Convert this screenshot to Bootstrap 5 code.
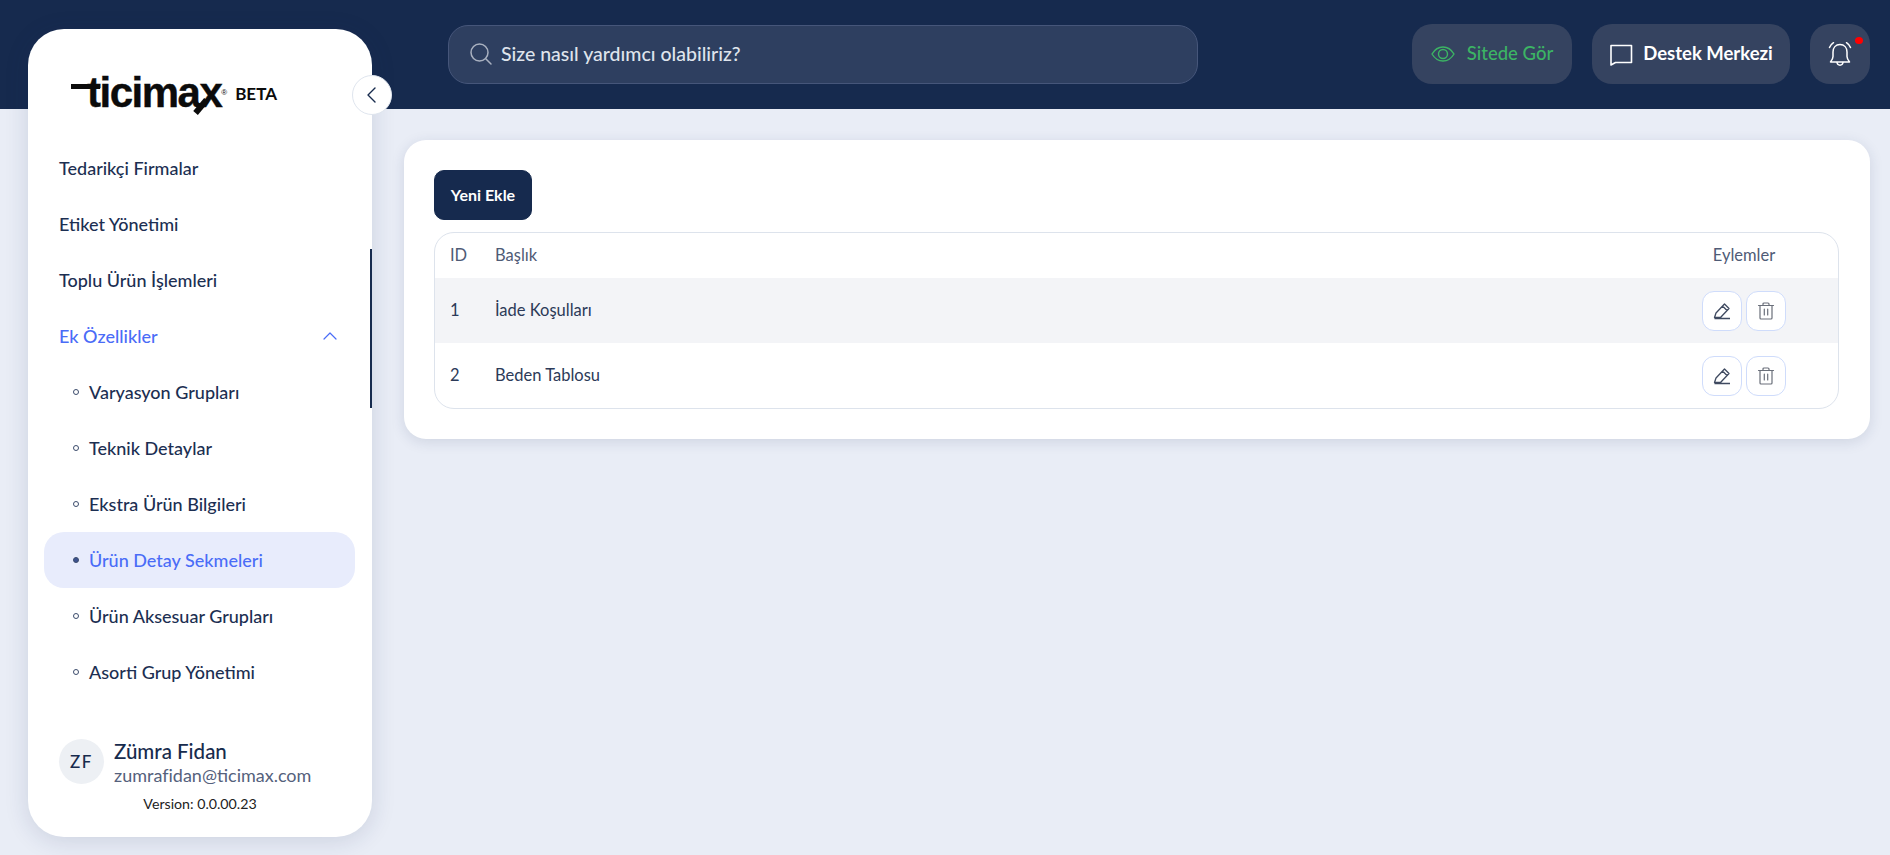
<!DOCTYPE html>
<html lang="tr">
<head>
    <meta charset="UTF-8">
    <meta name="viewport" content="width=device-width, initial-scale=1.0">
    <title>Ticimax - Ürün Detay Sekmeleri</title>
    <link rel="stylesheet" href="https://cdn.jsdelivr.net/npm/bootstrap@5.3.0/dist/css/bootstrap.min.css">
    <style>
    body {
        font-family: "Lato", "Noto Sans", sans-serif;
        background-color: #e9edf6;
        color: #172b4d;
        overflow: hidden;
    }

    .app-shell {
        display: grid;
        grid-template-columns: 404px 1fr;
        grid-template-rows: 109px 746px;
        height: 855px;
    }

    /* Header band runs under the sidebar */
    .top-band {
        grid-column: 1 / 3;
        grid-row: 1;
        background-color: #162a4e;
        padding: 24px 20px 25px 448px;
    }

    .search-box {
        width: 750px;
        height: 59px;
        background-color: #2e3f60;
        border: 1px solid #46567a;
        border-radius: 20px;
        padding-left: 20px;
        color: #dfe4ec;
        font-size: 19.5px;
        font-weight: 500;
    }

    .head-btn {
        height: 60px;
        background-color: #354360;
        border-radius: 20px;
        font-size: 18.5px;
        font-weight: 700;
        color: #fff;
        position: relative;
    }

    .head-btn.site-btn { width: 160px; color: #3cb464; font-weight: 500; gap: 12px; }
    .head-btn.help-btn { width: 198px; gap: 10px; }
    .head-btn.bell-btn { width: 60px; }

    .bell-dot {
        position: absolute;
        top: 13px;
        right: 7px;
        width: 8px;
        height: 7px;
        border-radius: 50%;
        background-color: #f00;
    }

    .side-panel {
        grid-column: 1;
        grid-row: 1 / 3;
        z-index: 2;
        margin: 29px 32px 18px 28px;
        background-color: #fff;
        border-radius: 36px;
        box-shadow: 0 4px 24px rgba(30, 45, 90, .14);
        position: relative;
    }

    .logo-row {
        height: 111px;
        padding: 43px 0 0 43px;
    }

    .logo-word {
        font-family: "Liberation Sans", sans-serif;
        font-size: 42px;
        line-height: 42px;
        font-weight: 700;
        letter-spacing: -1.5px;
        color: #0b0b0b;
        position: relative;
        padding-left: 16px;
        -webkit-text-stroke: .4px #0b0b0b;
    }

    .logo-word::before {
        content: "";
        position: absolute;
        left: 0;
        top: 12px;
        width: 29px;
        height: 5px;
        background-color: #0b0b0b;
    }

    /* long stroke of the x in the logo */
    .logo-word::after {
        content: "";
        position: absolute;
        left: 127px;
        top: 26px;
        width: 6px;
        height: 17px;
        background-color: #0b0b0b;
        transform: rotate(40deg);
    }

    .logo-reg {
        font-size: 8px;
        letter-spacing: 0;
        vertical-align: 12px;
        font-weight: 400;
        -webkit-text-stroke: 0;
    }

    .logo-beta {
        font-size: 17px;
        font-weight: 700;
        color: #0b0b0b;
        margin-left: 8px;
        margin-top: 9px;
    }

    .collapse-btn {
        position: absolute;
        top: 46px;
        right: -20px;
        width: 40px;
        height: 40px;
        border-radius: 50%;
        background-color: #fff;
        border: 1px solid #dfe5ee;
    }

    .side-scroll {
        position: absolute;
        top: 220px;
        right: 0;
        width: 2px;
        height: 159px;
        background-color: #162a4e;
    }

    .menu-link {
        height: 56px;
        font-size: 18px;
        font-weight: 500;
        color: #1c2f52;
        padding: 0 34px 0 31px;
    }

    .menu-link.open-item { color: #4a6cf7; }

    .menu-link.sub-item {
        padding-left: 45px;
        margin-left: 16px;
        margin-right: 17px;
        border-radius: 20px;
    }

    .menu-link.sub-item.now-active {
        background-color: #e8ecfc;
        color: #4a6cf7;
    }

    .sub-dot {
        width: 6px;
        height: 6px;
        border: 1.5px solid #3c4c6c;
        border-radius: 50%;
        margin-right: 10px;
        margin-left: -16px;
    }

    .now-active .sub-dot { background-color: #3c5290; }

    .user-block { padding-bottom: 23px; }
    .user-row { padding-left: 31px; gap: 10px; }

    .user-avatar {
        width: 45px;
        height: 45px;
        border-radius: 50%;
        background-color: #edf0f4;
        font-size: 17px;
        font-weight: 500;
        letter-spacing: 1.5px;
    }

    .user-name { font-size: 20.5px; font-weight: 500; line-height: 26px; }
    .user-mail { font-size: 18px; color: #55617c; line-height: 22px; }
    .app-version { font-size: 14.2px; color: #222; margin-top: 7px; }

    .page-area {
        grid-column: 2;
        grid-row: 2;
        padding: 31px 20px 0 0;
    }

    .content-box {
        height: 299px;
        background-color: #fff;
        border-radius: 22px;
        box-shadow: 0 3px 14px rgba(30, 45, 90, .13);
        padding: 30px 31px 0 30px;
    }

    .add-btn {
        width: 98px;
        height: 50px;
        padding: 0;
        font-size: 16px;
        font-weight: 700;
        background-color: #162a4e;
        border-color: #162a4e;
        border-radius: 10px;
    }

    .list-frame {
        margin-top: 12px;
        border: 1px solid #dde3ec;
        border-radius: 20px;
        overflow: hidden;
    }

    .list-frame .table { margin: 0; table-layout: fixed; }

    .list-frame .table th,
    .list-frame .table td {
        border: 0;
        padding: 0;
        vertical-align: middle;
        font-size: 16.5px;
        color: #2c3a58;
        font-weight: 400;
    }

    .list-frame .table th { height: 45px; color: #4f5b76; }
    .list-frame .table td { height: 65px; }
    .list-frame .row-shaded td { background-color: #f3f4f7; }
    .col-id { width: 60px; padding-left: 15px !important; }
    .col-actions { width: 188px; }

    .icon-btn {
        width: 40px;
        height: 40px;
        padding: 0;
        background-color: #fff;
        border: 1px solid #cfdcfb;
        border-radius: 12px;
    }
    </style>
</head>
<body>
    <div class="app-shell">
        <header class="top-band d-flex justify-content-between align-items-center">
            <div class="search-box d-flex align-items-center gap-2">
                <svg width="24" height="24" viewBox="0 0 24 24" fill="none" stroke="#a9b1c0" stroke-width="1.5" stroke-linecap="round"><circle cx="10.5" cy="10.5" r="8.5"/><path d="M17 17l5 5"/></svg>
                <span>Size nasıl yardımcı olabiliriz?</span>
            </div>
            <div class="d-flex gap-3 align-items-center">
                <div class="head-btn site-btn d-flex align-items-center justify-content-center me-1">
                    <svg width="24" height="24" viewBox="0 0 24 24" fill="none" stroke="#3cb464" stroke-width="1.4"><path d="M1 12c3-5 6.700-7 11-7s8 2 11 7c-3 5-6.700 7-11 7s-8-2-11-7z"/><circle cx="12" cy="12" r="4.500"/></svg>
                    <span>Sitede Gör</span>
                </div>
                <div class="head-btn help-btn d-flex align-items-center justify-content-center me-1">
                    <svg width="24" height="24" viewBox="0 0 24 24" fill="none" stroke="#fff" stroke-width="1.6" stroke-linejoin="round"><path d="M2 3.500h20.500v17H6.500L2 23z"/></svg>
                    <span>Destek Merkezi</span>
                </div>
                <div class="head-btn bell-btn d-flex align-items-center justify-content-center">
                    <svg width="28" height="28" viewBox="0 0 28 28" fill="none" stroke="#fff" stroke-width="1.5" stroke-linecap="round" stroke-linejoin="round"><path d="M14 4.500c-4.300 0-7 3.200-7 7.500v4.500c0 2-1 3.500-2.500 5.500h19c-1.500-2-2.500-3.500-2.500-5.500V12c0-4.300-2.700-7.500-7-7.500z"/><path d="M11 22.500c.3 1.800 1.500 2.700 3 2.700s2.700-.9 3-2.700"/><path d="M3.500 7.500C4.300 5.500 5.500 4 7.500 2.700M24.500 7.500C23.700 5.500 22.500 4 20.500 2.700"/></svg>
                    <span class="bell-dot"></span>
                </div>
            </div>
        </header>

        <aside class="side-panel d-flex flex-column">
            <div class="logo-row d-flex align-items-start">
                <span class="logo-word">ticimax<span class="logo-reg">®</span></span>
                <span class="logo-beta">BETA</span>
            </div>
            <button class="collapse-btn d-flex align-items-center justify-content-center p-0" type="button" aria-label="Daralt">
                <svg width="18" height="18" viewBox="0 0 18 18" fill="none" stroke="#172b4d" stroke-width="1.4" stroke-linecap="round" stroke-linejoin="round"><path d="M12 2L5 9l7 7"/></svg>
            </button>
            <span class="side-scroll"></span>

            <nav class="d-flex flex-column">
                <div class="menu-link d-flex align-items-center">Tedarikçi Firmalar</div>
                <div class="menu-link d-flex align-items-center">Etiket Yönetimi</div>
                <div class="menu-link d-flex align-items-center">Toplu Ürün İşlemleri</div>
                <div class="menu-link open-item d-flex align-items-center justify-content-between">
                    <span>Ek Özellikler</span>
                    <svg width="16" height="16" viewBox="0 0 16 16" fill="none" stroke="#4a6cf7" stroke-width="1.2" stroke-linecap="round" stroke-linejoin="round"><path d="M2 11l6-6 6 6"/></svg>
                </div>
                <div class="menu-link sub-item d-flex align-items-center"><span class="sub-dot"></span>Varyasyon Grupları</div>
                <div class="menu-link sub-item d-flex align-items-center"><span class="sub-dot"></span>Teknik Detaylar</div>
                <div class="menu-link sub-item d-flex align-items-center"><span class="sub-dot"></span>Ekstra Ürün Bilgileri</div>
                <div class="menu-link sub-item now-active d-flex align-items-center"><span class="sub-dot"></span>Ürün Detay Sekmeleri</div>
                <div class="menu-link sub-item d-flex align-items-center"><span class="sub-dot"></span>Ürün Aksesuar Grupları</div>
                <div class="menu-link sub-item d-flex align-items-center"><span class="sub-dot"></span>Asorti Grup Yönetimi</div>
            </nav>

            <div class="user-block mt-auto">
                <div class="user-row d-flex align-items-center">
                    <div class="user-avatar d-flex align-items-center justify-content-center flex-shrink-0">ZF</div>
                    <div>
                        <div class="user-name">Zümra Fidan</div>
                        <div class="user-mail">zumrafidan@ticimax.com</div>
                    </div>
                </div>
                <div class="app-version text-center">Version: 0.0.00.23</div>
            </div>
        </aside>

        <main class="page-area">
            <div class="content-box">
                <button class="btn btn-primary add-btn" type="button">Yeni Ekle</button>
                <div class="list-frame">
                    <table class="table">
                        <thead>
                            <tr>
                                <th class="col-id">ID</th>
                                <th>Başlık</th>
                                <th class="col-actions text-center">Eylemler</th>
                            </tr>
                        </thead>
                        <tbody>
                            <tr class="row-shaded">
                                <td class="col-id">1</td>
                                <td>İade Koşulları</td>
                                <td class="col-actions">
                                    <div class="d-flex justify-content-center gap-1">
                                        <button class="icon-btn d-flex align-items-center justify-content-center" type="button" aria-label="Düzenle">
                                            <svg width="20" height="20" viewBox="0 0 20 20" fill="none" stroke="#3f4a60" stroke-width="1.3" stroke-linejoin="round"><path d="M2.500 16.500L4 12l8.500-9 4.500 4.500-8.500 9zM10.500 5l4.500 4.500M2.500 17.500H18"/></svg>
                                        </button>
                                        <button class="icon-btn d-flex align-items-center justify-content-center" type="button" aria-label="Sil">
                                            <svg width="20" height="20" viewBox="0 0 20 20" fill="none" stroke="#6a6f7a" stroke-width="1.2" stroke-linecap="round"><path d="M2.500 4.500h15M4 4.500V17a1 1 0 0 0 1 1h10a1 1 0 0 0 1-1V4.500M7 4.500V3a1 1 0 0 1 1-1h4a1 1 0 0 1 1 1v1.500M8.300 8v6M11.700 8v6"/></svg>
                                        </button>
                                    </div>
                                </td>
                            </tr>
                            <tr>
                                <td class="col-id">2</td>
                                <td>Beden Tablosu</td>
                                <td class="col-actions">
                                    <div class="d-flex justify-content-center gap-1">
                                        <button class="icon-btn d-flex align-items-center justify-content-center" type="button" aria-label="Düzenle">
                                            <svg width="20" height="20" viewBox="0 0 20 20" fill="none" stroke="#3f4a60" stroke-width="1.3" stroke-linejoin="round"><path d="M2.500 16.500L4 12l8.500-9 4.500 4.500-8.500 9zM10.500 5l4.500 4.500M2.500 17.500H18"/></svg>
                                        </button>
                                        <button class="icon-btn d-flex align-items-center justify-content-center" type="button" aria-label="Sil">
                                            <svg width="20" height="20" viewBox="0 0 20 20" fill="none" stroke="#6a6f7a" stroke-width="1.2" stroke-linecap="round"><path d="M2.500 4.500h15M4 4.500V17a1 1 0 0 0 1 1h10a1 1 0 0 0 1-1V4.500M7 4.500V3a1 1 0 0 1 1-1h4a1 1 0 0 1 1 1v1.500M8.300 8v6M11.700 8v6"/></svg>
                                        </button>
                                    </div>
                                </td>
                            </tr>
                        </tbody>
                    </table>
                </div>
            </div>
        </main>
    </div>

    <script src="https://cdn.jsdelivr.net/npm/bootstrap@5.3.0/dist/js/bootstrap.bundle.min.js"></script>
</body>
</html>
